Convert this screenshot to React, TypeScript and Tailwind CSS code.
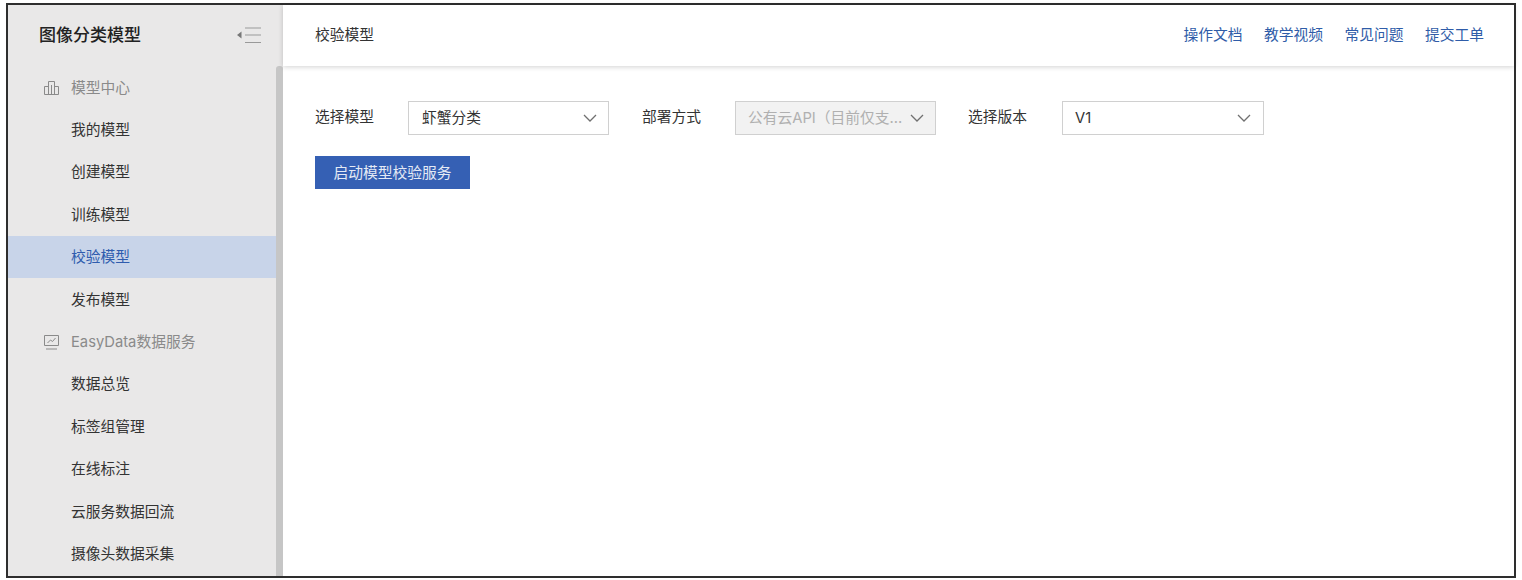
import React from "react";

function Chevron({ className }: { className: string }) {
  return (
    <svg width="14" height="8" viewBox="0 0 14 8" fill="none" className={className}>
      <path d="M1 1l6 6 6-6" stroke="currentColor" strokeWidth="1.3" />
    </svg>
  );
}

function Select({ text, disabled, wide }: { text: string; disabled?: boolean; wide?: boolean }) {
  return (
    <div
      className={`flex h-[34px] shrink-0 items-center border border-[#d0d0d0] ${wide ? "w-[202px]" : "w-[201px]"} ${
        disabled
          ? "bg-[#f2f2f2] pl-[12px] pr-[11px] text-[#b0b0b0]"
          : wide
            ? "bg-white pl-[12px] pr-[12px] text-[#333]"
            : "bg-white pl-[13px] pr-[11px] text-[#333]"
      }`}
    >
      <span className="flex-1 whitespace-nowrap">{text}</span>
      <Chevron className="text-[#707070]" />
    </div>
  );
}

function Group({ text, icon }: { text: string; icon: React.ReactNode }) {
  return (
    <div className="flex h-[42.4px] items-center pt-[1px] text-[#8a8a8a]">
      <span className="flex w-[63px] justify-end pr-[12px]">{icon}</span>
      <span>{text}</span>
    </div>
  );
}

function Item({ text, active }: { text: string; active?: boolean }) {
  return (
    <div
      className={`flex h-[42.4px] items-center pl-[63px] pt-[1px] ${
        active ? "bg-[#c8d4e9] text-[#2f5cae]" : "text-[#333]"
      }`}
    >
      {text}
    </div>
  );
}

export default function App() {
  return (
    <div className="h-[580px] w-[1522px] overflow-hidden bg-white pb-[2px] pl-[6px] pr-[6px] pt-[3px] font-['Inter','Noto_Sans_CJK_SC',sans-serif] text-[14.75px]">
      <div className="flex h-full border-2 border-[#2e2e2e]">
        <aside className="flex h-full w-[275px] shrink-0 flex-col bg-[#e9e8e8]">
          <div className="flex h-[61px] shrink-0 items-center justify-between pl-[31px] pr-[21px]">
            <span className="text-[17px] font-medium text-[#222]">图像分类模型</span>
            <svg width="26" height="18" viewBox="0 0 26 18" fill="none" className="mb-[2px]">
              <path d="M1 9l4.5-3.5v7z" fill="#777" />
              <path d="M9 2h16M9 9h16M9 16.5h16" stroke="#999" strokeWidth="1.2" />
            </svg>
          </div>
          <div className="flex min-h-0 flex-1">
            <div className="min-w-0 flex-1 overflow-hidden">
              <Group
                text="模型中心"
                icon={
                  <svg width="15" height="14" viewBox="0 0 15 14" fill="none" stroke="#8a8a8a" strokeWidth="1">
                    <path d="M.5 13.5h14M.5 13.5V5.5h4M14.5 13.5V5.5h-4M4.5 13.5V.5h6v13M7.5 4v9.5" />
                  </svg>
                }
              />
              <Item text="我的模型" />
              <Item text="创建模型" />
              <Item text="训练模型" />
              <Item text="校验模型" active />
              <Item text="发布模型" />
              <Group
                text="EasyData数据服务"
                icon={
                  <svg width="15" height="15" viewBox="0 0 15 15" fill="none" stroke="#8a8a8a" strokeWidth="1">
                    <path d="M.5.5h14v10H.5zM2 14h11M3.5 8l3-3 2 1.5 3-3.5" />
                  </svg>
                }
              />
              <Item text="数据总览" />
              <Item text="标签组管理" />
              <Item text="在线标注" />
              <Item text="云服务数据回流" />
              <Item text="摄像头数据采集" />
            </div>
            <div className="w-[7px] shrink-0 rounded-t-[3px] bg-[#c6c6c6]" />
          </div>
        </aside>
        <main className="flex min-w-0 flex-1 flex-col bg-white">
          <header className="flex h-[61px] shrink-0 items-center justify-between pl-[32px] pr-[30px] shadow-[0_1px_5px_rgba(0,0,0,0.18)]">
            <span className="text-[#333]">校验模型</span>
            <nav className="mb-[1px] flex gap-[21.5px] text-[#2f5ca8]">
              <span>操作文档</span>
              <span>教学视频</span>
              <span>常见问题</span>
              <span>提交工单</span>
            </nav>
          </header>
          <div className="pl-[32px] pt-[35px]">
            <div className="flex items-center text-[#333]">
              <span className="mb-[2px] w-[93px]">选择模型</span>
              <Select text="虾蟹分类" />
              <span className="mb-[2px] ml-[33px] w-[93px]">部署方式</span>
              <Select text="公有云API（目前仅支..." disabled />
              <span className="mb-[2px] ml-[32px] w-[94px]">选择版本</span>
              <Select text="V1" wide />
            </div>
            <button className="mt-[21px] flex h-[33px] w-[155px] items-center justify-center bg-[#3560b4] pt-[1px] text-[#e4eaf5]">
              启动模型校验服务
            </button>
          </div>
        </main>
      </div>
    </div>
  );
}
